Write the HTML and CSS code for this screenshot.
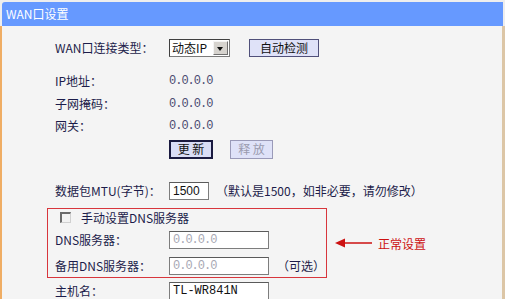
FILE: index.html
```html
<!DOCTYPE html>
<html lang="zh-CN">
  <head>
    <meta charset="UTF-8" />
    <title>WAN口设置</title>
    <link rel="stylesheet" href="styles.css">
  </head>
  <body>
    <div class="frame">
      <div class="title">WAN口设置</div>
      <div class="content">
        <div class="row row-type">
          <span class="label">WAN口连接类型：</span>
          <div class="select">
            <span class="select-text">动态IP</span>
            <span class="select-arrow"></span>
          </div>
          <button class="btn btn-detect">自动检测</button>
        </div>

        <div class="row row-info row-ip">
          <span class="label">IP地址：</span>
          <span class="value">0.0.0.0</span>
        </div>
        <div class="row row-info row-mask">
          <span class="label">子网掩码：</span>
          <span class="value">0.0.0.0</span>
        </div>
        <div class="row row-info">
          <span class="label">网关：</span>
          <span class="value">0.0.0.0</span>
        </div>

        <div class="row row-actions">
          <span class="label"></span>
          <button class="btn btn-renew">更 新</button>
          <button class="btn btn-release">释 放</button>
        </div>

        <div class="row row-mtu">
          <span class="label">数据包MTU(字节)：</span>
          <div class="field field-mtu">1500</div>
          <span class="hint">（默认是1500，如非必要，请勿修改）</span>
        </div>

        <div class="dns-line">
          <div class="dns-box">
            <div class="row row-check">
              <span class="check"></span>
              <span>手动设置DNS服务器</span>
            </div>
            <div class="row row-dns">
              <span class="label">DNS服务器：</span>
              <div class="field field-ip placeholder">0.0.0.0</div>
            </div>
            <div class="row row-dns">
              <span class="label">备用DNS服务器：</span>
              <div class="field field-ip placeholder">0.0.0.0</div>
              <span class="hint hint-optional">（可选）</span>
            </div>
          </div>
          <svg class="arrow" width="38" height="12" viewBox="0 0 38 12">
            <path d="M0 6 L10 1.5 L10 10.5 Z" fill="#cc1111" />
            <line x1="8" y1="6" x2="37" y2="6" stroke="#cc1111" stroke-width="1.5" />
          </svg>
          <span class="note">正常设置</span>
        </div>

        <div class="row row-host">
          <span class="label">主机名：</span>
          <div class="field field-ip field-host">TL-WR841N</div>
        </div>
      </div>
    </div>
  </body>
</html>
```

FILE: styles.css
```css
:root {
  --text-color: #1c1c4a;
  --value-color: #4b4b70;
  --panel-bg: #f4f4f4;
  --header-bg: #6699ff;
  --label-w: 114px;
}

body {
  margin: 0;
  width: 505px;
  height: 299px;
  overflow: hidden;
  background: #eeeeee;
  font-family: "Noto Sans CJK SC", "Noto Sans", sans-serif;
  font-size: 12px;
  color: var(--text-color);
}

.frame {
  height: 299px;
  padding-top: 2px;
  box-sizing: border-box;
  display: flex;
  flex-direction: column;
}

.title {
  height: 24px;
  line-height: 24px;
  margin: 0 2px;
  padding-left: 4px;
  background-color: var(--header-bg);
  color: #ffffff;
  border-radius: 3px 0 0 0;
}

.content {
  flex: 1;
  background-color: var(--panel-bg);
  border-left: 2px solid #efad64;
  border-right: 3px solid #dcc6a6;
  padding-left: 53px;
}

.row {
  display: flex;
  align-items: center;
  line-height: 16px;
}

.label {
  width: var(--label-w);
  flex-shrink: 0;
}

.row-type {
  height: 18px;
  margin-top: 13px;
}

.row-ip {
  margin-top: 13px;
}

.row-info {
  height: 22px;
}

.row-mask {
  height: 23px;
}

.value {
  font-family: "Liberation Mono", monospace;
  font-size: 12px;
  letter-spacing: -1px;
  color: var(--value-color);
}

.select {
  display: flex;
  align-items: center;
  width: 61px;
  height: 18px;
  box-sizing: border-box;
  background: #ffffff;
  border: 1px solid #7a7a7a;
  border-top-color: #404040;
  border-left-color: #404040;
  padding: 1px;
}

.select-text {
  flex: 1;
  padding-left: 1px;
  color: #111;
}

.select-arrow {
  width: 15px;
  height: 14px;
  box-sizing: border-box;
  background: #d6d3ce;
  border: 1px solid #f4f4f4;
  border-right-color: #707070;
  border-bottom-color: #707070;
  position: relative;
}

.select-arrow::after {
  content: "";
  position: absolute;
  left: 3px;
  top: 5px;
  border-left: 3.5px solid transparent;
  border-right: 3.5px solid transparent;
  border-top: 4px solid #111;
}

.btn {
  font-family: inherit;
  font-size: 12px;
  padding: 0;
  color: var(--text-color);
  background-color: #dfe2f8;
  border: 1px solid #50507a;
  line-height: 14px;
}

.btn-detect {
  margin-left: 19px;
  width: 70px;
  height: 18px;
  color: #111;
}

.row-actions {
  height: 20px;
  margin-top: 2px;
}

.btn-renew {
  width: 44px;
  height: 19px;
  border: 2px solid #1a1a40;
  background-color: #d9ddf6;
  color: #111;
}

.btn-release {
  margin-left: 17px;
  width: 43px;
  height: 19px;
  border-color: #9a9ab8;
  color: #9a9aae;
}

.field {
  height: 18px;
  box-sizing: border-box;
  background: #ffffff;
  border: 1px solid #7d7d7d;
  border-top-color: #5a5a5a;
  padding: 0 3px;
  line-height: 16px;
  flex-shrink: 0;
}

.row-mtu {
  height: 18px;
  margin-top: 23px;
}

.field-mtu {
  width: 40px;
  font-family: "Liberation Sans", sans-serif;
  color: #111;
}

.hint {
  margin-left: 7px;
}

.field-ip {
  width: 100px;
}

.placeholder {
  font-family: "Liberation Mono", monospace;
  font-size: 12px;
  letter-spacing: -1px;
  color: #a8a8b4;
}

.hint-optional {
  margin-left: 8px;
}

.dns-line {
  display: flex;
  align-items: center;
  margin-top: 8px;
}

.dns-box {
  width: 280px;
  height: 70px;
  box-sizing: border-box;
  margin-left: -8px;
  padding: 3px 0 0 7px;
  border: 1px solid #d8363c;
}

.row-check {
  height: 11px;
}

.check {
  width: 11px;
  height: 11px;
  box-sizing: border-box;
  margin: 0 10px 0 5px;
  background: #f2f2f2;
  border: 1px solid #d0d0d0;
  border-top: 2px solid #6a6a6a;
  border-left: 2px solid #6a6a6a;
}

.row-dns {
  height: 18px;
  margin-top: 8px;
}

.arrow {
  margin-left: 8px;
}

.note {
  margin-left: 5px;
  color: #cc1111;
}

.row-host {
  height: 18px;
  margin-top: 4px;
}

.field-host {
  font-family: "Liberation Mono", monospace;
  color: #111;
}
```
